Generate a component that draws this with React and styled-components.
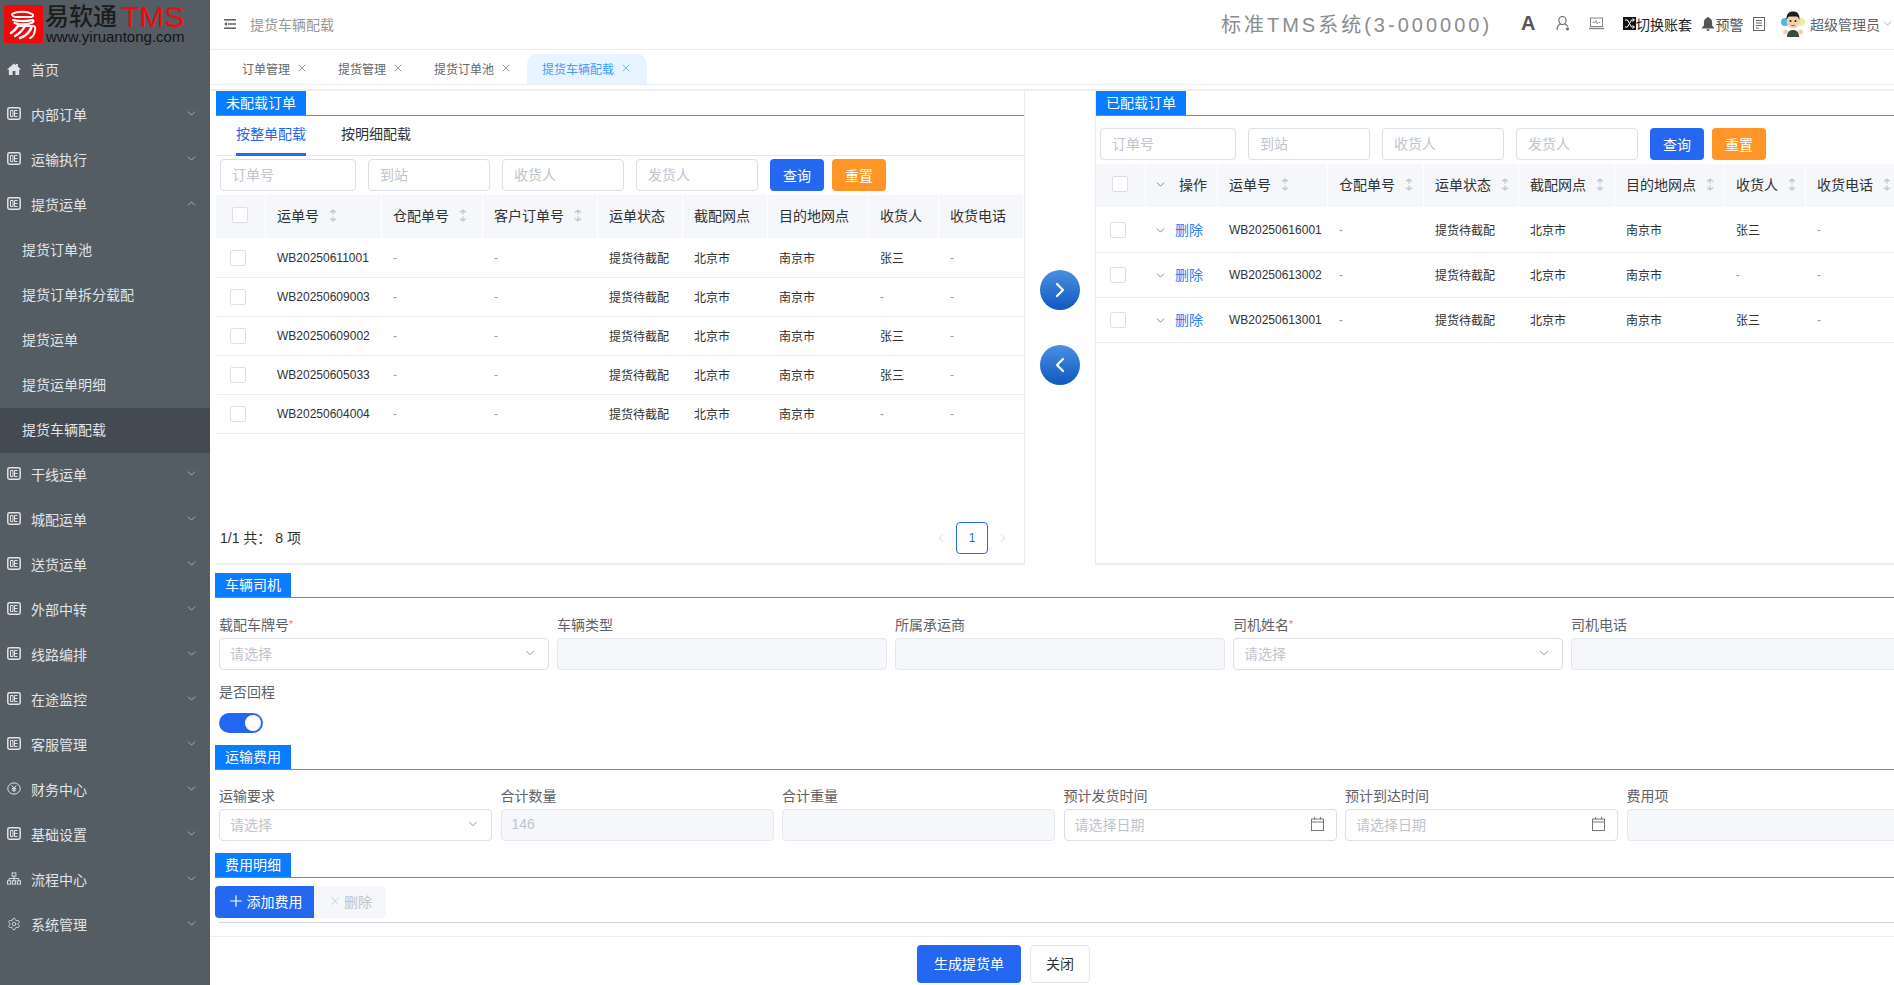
import React from "react";
import styled, { createGlobalStyle } from "styled-components";
import { ChevronDown, ChevronUp, ChevronLeft, ChevronRight, X, Plus, Settings } from "lucide-react";

const Global = createGlobalStyle`
  html, body { margin: 0; padding: 0; height: 100%; overflow: hidden; background: #fff; }
  body { font-family: "Liberation Sans", "Noto Sans CJK SC", sans-serif; font-size: 14px; color: #333; }
  * { box-sizing: border-box; }
  input::placeholder { color: #c0c4cc; opacity: 1; }
`;

const Page = styled.div`display: flex; width: 1894px; height: 985px; overflow: hidden;`;
const Sidebar = styled.aside`width: 210px; flex: none; background: #545c64; color: #e2e4e6;`;
const Logo = styled.div`height: 48px; display: flex; padding: 5px 0 0 4px;`;
const LogoWords = styled.div`margin-left: 2px; display: flex; flex-direction: column;`;
const LogoTop = styled.div`display: flex; align-items: center; height: 26px; line-height: 26px; margin-top: -1px; color: #1c1c1c; font-size: 24px; font-weight: 500; white-space: nowrap;`;
const LogoTms = styled.span`color: #f20a0a; font-size: 30px; line-height: 26px; margin-left: 4px; font-weight: 400;`;
const LogoUrl = styled.div`color: #141414; font-size: 15px; line-height: 13px; padding-left: 1px; white-space: nowrap;`;
const MenuItem = styled.div`
  height: 45px; display: flex; align-items: center; position: relative; padding-bottom: 4px;
  padding-left: ${p => (p.$sub ? "22px" : "7px")};
  background: ${p => (p.$active ? "#434a52" : "transparent")};
`;
const MenuIcon = styled.span`width: 14px; height: 14px; margin-right: 10px; display: flex; align-items: center; justify-content: center; color: #e2e4e6;`;
const MenuArrow = styled.span`margin-left: auto; margin-right: 12px; display: flex; color: #dfe1e3;`;

const Main = styled.main`width: 1684px; flex: none; display: flex; flex-direction: column; height: 985px; overflow: hidden;`;
const Header = styled.header`height: 50px; border-bottom: 1px solid #eee; display: flex; align-items: center; padding: 0 0 2px 14px; flex: none;`;
const Crumb = styled.span`margin-left: 14px; color: #97979a;`;
const HeadRight = styled.div`margin-left: auto; display: flex; align-items: center; color: #606266;`;
const SysTitle = styled.span`font-size: 20px; letter-spacing: 3px; color: #8c8c8c; margin-right: 29px; white-space: nowrap;`;
const HeadBit = styled.span`display: flex; align-items: center; margin-left: ${p => p.$ml || 0}px; color: ${p => p.$c || "#606266"}; white-space: nowrap;`;
const BellText = styled.span`margin-left: 2px;`;
const LetterA = styled.span`font-size: 20px; font-weight: 700; color: #555;`;

const TabBar = styled.nav`height: 35px; flex: none; display: flex; align-items: flex-end; padding-left: 17px; border-bottom: 1px solid #eee;`;
const Tab = styled.div`
  height: 30px; display: flex; align-items: center; gap: 6px; padding: 0 15px 2px; font-size: 12px;
  color: ${p => (p.$active ? "#409eff" : "#666")};
  background: ${p => (p.$active ? "#e8f4ff" : "transparent")};
  border-radius: 10px 10px 0 0;
`;
const Body = styled.div`margin-top: 4px; border-top: 2px solid #eee; padding-left: 5px; flex: none;`;
const TopRow = styled.section`display: flex; height: 474px; margin-left: 1px;`;
const Panel = styled.div`
  width: ${p => p.$w}px; flex: none; display: flex; flex-direction: column;
  border-bottom: 2px solid #eee;
  ${p => (p.$right ? "border-left: 1px solid #eee;" : "border-right: 1px solid #eee;")}
`;
const Mid = styled.div`width: 70px; flex: none; display: flex; flex-direction: column; align-items: center; padding-top: 179px; gap: 35px;`;
const Circle = styled.button`
  width: 40px; height: 40px; border-radius: 50%; border: 0; padding: 0; color: #fff; display: flex; align-items: center; justify-content: center;
  background: linear-gradient(180deg, #4b8fe2, #0f59bf);
`;
const SectionHead = styled.div`height: 25px; border-bottom: 1px solid #4a90e8; flex: none;`;
const SectionTag = styled.span`
  display: inline-block; height: 24px; line-height: 24px; padding: 0 10px; background: #0a7cff; color: #fff; font-size: 14px; white-space: nowrap;
`;
const SubTabs = styled.div`height: 40px; flex: none; display: flex; gap: 35px; padding-left: 20px; border-bottom: 1px solid #e4e7ed;`;
const SubTab = styled.div`
  height: 40px; line-height: 36px; color: ${p => (p.$active ? "#2468f2" : "#303133")};
  border-bottom: ${p => (p.$active ? "3px solid #2468f2" : "0")};
`;
const Filters = styled.div`display: flex; gap: 12px; height: 32px; flex: none; margin-top: ${p => p.$mt}px; padding-left: 4px;`;
const FilterInput = styled.input`
  width: ${p => p.$w}px; height: 32px; border: 1px solid #dcdfe6; border-radius: 4px; padding: 0 11px; font: inherit; outline: 0; background: #fff;
`;
const Btn = styled.button`
  height: 32px; width: ${p => p.$w || 54}px; border: 0; border-radius: 4px; color: #fff; font: inherit; padding: 0 0 1px;
  background: ${p => p.$bg}; margin-left: ${p => p.$ml || 0}px;
`;
const Table = styled.div`margin-top: 4px; flex: none; width: ${p => p.$w}px;`;
const Row = styled.div`
  display: grid; grid-template-columns: ${p => p.$cols}; align-items: center;
  height: ${p => (p.$head ? 44 : p.$h)}px;
  background: ${p => (p.$head ? "#f5f7fa" : "#fff")};
  border-bottom: ${p => (p.$head ? "1px solid #fff" : "1px solid #ebeef5")};
`;
const HeadCell = styled.div`
  height: 100%; display: flex; align-items: center; gap: 10px; padding: 0 0 3px ${p => (p.$pl === undefined ? 11 : p.$pl)}px; color: #303133; font-size: 14px;
  border-right: 1px solid #fff; white-space: nowrap; overflow: hidden;
`;
const Cell = styled.div`
  padding-left: ${p => (p.$pl === undefined ? 11 : p.$pl)}px; padding-bottom: ${p => (p.$cjk ? 2 : 0)}px; font-size: 12px; color: ${p => (p.$dash ? "#999" : "#303133")}; white-space: nowrap; display: flex; align-items: center;
`;
const Check = styled.span`display: block; width: 16px; height: 16px; border: 1px solid #dcdfe6; border-radius: 2px; background: #fff;`;
const OpLabel = styled.span`margin-left: 2px;`;
const DelLink = styled.span`color: #2b7cf6; font-size: 14px; margin-left: 8px; margin-bottom: 2px;`;
const Pager = styled.div`margin-top: auto; height: 32px; display: flex; align-items: center; padding: 0 14px 0 4px; margin-bottom: 9px; color: #303133;`;
const PagerText = styled.span`margin-bottom: 3px;`;
const PagerNum = styled.span`
  width: 32px; height: 32px; border: 1px solid #2468f2; border-radius: 4px; color: #2468f2; font-size: 12px; display: flex; align-items: center; justify-content: center; margin: 0 8px;
`;
const PagerArrow = styled.span`display: flex; color: #c0c4cc;`;
const PagerBox = styled.div`margin-left: auto; display: flex; align-items: center;`;

const Section = styled.section`margin-top: ${p => p.$mt}px;`;
const FormGrid = styled.div`display: flex; gap: ${p => p.$gap}px; padding: ${p => p.$pt}px 0 0 4px; width: 1800px;`;
const Field = styled.div`width: ${p => p.$w}px; flex: none;`;
const Label = styled.div`height: 24px; line-height: 24px; margin-bottom: 1px; color: #606266;`;
const Req = styled.span`color: #f56c6c; font-size: 10px; vertical-align: 2px;`;
const Box = styled.div`
  height: 32px; border: 1px solid ${p => (p.$off ? "#e4e7ed" : "#dcdfe6")}; border-radius: 4px; background: ${p => (p.$off ? "#f5f7fa" : "#fff")};
  display: flex; align-items: center; justify-content: space-between; padding: 0 ${p => p.$pr || 10}px 2px 10px; color: #c0c4cc;
`;
const BoxIcon = styled.span`display: flex; color: #777;`;
const SwitchWrap = styled.div`padding: 8px 0 0 4px;`;
const Switch = styled.span`
  display: block; width: 44px; height: 20px; border-radius: 10px; background: #2468f2; position: relative;
  &::after { content: ""; position: absolute; right: 2px; top: 2px; width: 16px; height: 16px; border-radius: 50%; background: #fff; }
`;
const ToolRow = styled.div`display: flex; margin-top: 8px; height: 32px;`;
const AddBtn = styled.button`
  width: 99px; height: 32px; border: 0; background: #2468f2; color: #fff; font: inherit; border-radius: 4px 0 0 4px; display: flex; align-items: center; justify-content: center; gap: 2px; padding: 0 0 2px;
`;
const DelBtn = styled.button`
  width: 72px; height: 32px; border: 0; background: #f5f7fa; color: #c0c4cc; font: inherit; border-radius: 0 4px 4px 0; display: flex; align-items: center; justify-content: center; gap: 2px; padding: 0 0 2px;
`;
const Rule = styled.hr`margin: 4px 0 0 4px; border: 0; border-top: 1px solid #d6d6dc; height: 0;`;
const Footer = styled.footer`margin-top: 13px; border-top: 1px solid #eee; padding: 8px 0 0 707px; display: flex; gap: 9px; flex: none;`;
const FootMain = styled.button`width: 104px; height: 38px; border: 0; border-radius: 4px; background: #2468f2; color: #fff; font: inherit; padding: 0 0 2px;`;
const FootPlain = styled.button`width: 60px; height: 38px; border: 1px solid #e4e7ed; border-radius: 4px; background: #fff; color: #303133; font: inherit; padding: 0 0 2px;`;

const LogoMark = () => (
  <svg width="39" height="38" viewBox="0 0 39 38" style={{ flex: "none" }} aria-label="易软通标志">
    <rect width="39" height="38" fill="#ee0a0a" />
    <g fill="none" stroke="#fff" strokeLinecap="round">
      <path d="M8 9c5-3 15-3 20 0 2 1 1 3-1 3H12c-3 0-4-2-4-3z" strokeWidth="2" />
      <path d="M9 15c6 1.500 13 1.500 19 0 1.500 0 2 1.500 .5 2.500-5 2.500-13 2.500-18 .5" strokeWidth="2.200" />
      <path d="M14 21c-2 3-4 5-7 7M21 21c-3 5-6 8-10 10M28 21c-2 6-6 10-12 12" strokeWidth="2.400" />
      <path d="M15 21h14c1.500 0 2.500 1 2.200 3-.6 5-2.200 8-5.200 9" strokeWidth="2" />
    </g>
  </svg>
);
const BoxGlyph = () => (
  <svg width="14" height="13" viewBox="0 0 14 13" fill="none" stroke="currentColor">
    <rect x="0.8" y="0.8" width="12.4" height="11.4" rx="1.6" strokeWidth="1.5" />
    <path d="M3.500 3.500h2.500v6H3.500zM7.500 3.500v6M7.500 3.500h3M7.500 6.500h3M7.500 9.500h3" strokeWidth="1" />
  </svg>
);
const House = () => (
  <svg width="16" height="14" viewBox="0 0 15 14" fill="currentColor">
    <path d="M7.500 1 0.300 7.200l.8.9L2 7.400V13.400h4V9.200h3v4.200h4V7.400l.9.7.8-.9L11.700 4.600V1.600h-2v1.300z" />
  </svg>
);
const Yen = () => (
  <svg width="14" height="13" viewBox="0 0 14 13" fill="none" stroke="currentColor">
    <ellipse cx="7" cy="6.500" rx="6.200" ry="5.600" strokeWidth="1" />
    <path d="M4.700 3.300 7 6.400l2.300-3.100M7 6.400v3.600M4.800 6.600h4.400M4.800 8.200h4.400" strokeWidth="1" />
  </svg>
);
const Org = () => (
  <svg width="15" height="13" viewBox="0 0 15 13" fill="none" stroke="currentColor" strokeWidth="1">
    <rect x="5.500" y="0.500" width="4" height="3.500" />
    <rect x="0.500" y="9" width="3.500" height="3.500" />
    <rect x="5.700" y="9" width="3.500" height="3.500" />
    <rect x="11" y="9" width="3.500" height="3.500" />
    <path d="M7.500 4v5M2.200 9V6.500h10.500V9" />
  </svg>
);
const Outdent = () => (
  <svg width="12" height="10" viewBox="0 0 12 10" fill="#666">
    <rect width="12" height="1.600" />
    <rect x="4" y="4.200" width="8" height="1.600" />
    <rect y="8.400" width="12" height="1.600" />
    <path d="M3 3v4L0 5z" />
  </svg>
);
const Person = () => (
  <svg width="14" height="15" viewBox="0 0 14 15" fill="none" stroke="#606266" strokeWidth="1.100">
    <ellipse cx="6.500" cy="4.500" rx="3.600" ry="4" />
    <path d="M1 14c0-3.400 2-5.400 3.600-6M12 10.500c-.6-1-1.400-1.900-3-2.600" />
    <circle cx="11.500" cy="13" r=".9" fill="#606266" />
  </svg>
);
const Monitor = () => (
  <svg width="15" height="13" viewBox="0 0 15 13" fill="none" stroke="#808488" strokeWidth="1">
    <rect x="1.500" y="1" width="12" height="8.500" />
    <path d="M3.500 5.500h2.500l1-2 1.200 3.500 1-1.500h2" strokeWidth=".8" />
    <path d="M0 11.500h15" strokeWidth="1.400" />
  </svg>
);
const SwitchGlyph = () => (
  <svg width="13" height="13" viewBox="0 0 13 13">
    <rect width="13" height="13" fill="#111" />
    <path d="M2 3h2.500l4 7H11M2 10h2.500l4-7H11M9.500 1.500 11.500 3l-2 1.500M9.500 8.500l2 1.500-2 1.500" fill="none" stroke="#fff" strokeWidth="1" />
  </svg>
);
const Bell = () => (
  <svg width="12" height="14" viewBox="0 0 12 14" fill="#555">
    <path d="M6 0c.7 0 1.100.5 1.100 1.100 2 .5 3 2.100 3 4v3.400L12 10.800v.6H0v-.6l1.900-2.300V5.100c0-1.900 1-3.500 3-4C4.900.5 5.300 0 6 0zM4.500 12.200h3C7.500 13.200 6.800 14 6 14s-1.500-.8-1.500-1.800z" />
  </svg>
);
const Doc = () => (
  <svg width="12" height="14" viewBox="0 0 12 14" fill="none" stroke="#666" strokeWidth="1">
    <rect x=".5" y=".5" width="11" height="13" />
    <path d="M3 3.500h6M3 6h6M3 8.500h6M3 11h3" />
  </svg>
);
const Avatar = () => (
  <svg width="26" height="26" viewBox="0 0 26 26">
    <circle cx="5" cy="11" r="4" fill="#4fb5ee" />
    <circle cx="21" cy="11" r="4" fill="#e4f0a8" />
    <path d="M7 26c0-5 2-7 6-7s6 2 6 7z" fill="#3d4a44" />
    <ellipse cx="13" cy="10" rx="6.500" ry="7.500" fill="#f4cfae" />
    <path d="M6.500 9C6 3 9 .5 13 .5S20 3 19.500 9c-1-2.500-2-3.500-3-3.500h-7c-1 0-2 1-3 3.500z" fill="#1c1c1c" />
    <circle cx="10.500" cy="10" r="1" fill="#222" />
    <circle cx="15.500" cy="10" r="1" fill="#222" />
    <path d="M11 14.500h4" stroke="#b55" strokeWidth="1" />
    <circle cx="5.500" cy="21" r="2.500" fill="#f4cfae" />
    <circle cx="20.500" cy="21" r="2.500" fill="#f4cfae" />
  </svg>
);
const Calendar = () => (
  <svg width="13" height="14" viewBox="0 0 13 14" fill="none" stroke="#777" strokeWidth="1">
    <rect x=".5" y="2" width="12" height="11.500" />
    <path d="M.5 5h12M3.500 0v2.500M9.500 0v2.500" />
  </svg>
);
const SortSvg = styled.svg`flex: none;`;
const Sort = () => (
  <SortSvg width="8" height="13" viewBox="0 0 8 13" fill="none" stroke="#c4c7cd" strokeWidth="1.300">
    <path d="M1 3.500 4 1l3 2.500M4 1v4.500M1 9.500 4 12l3-2.500M4 12V7.500" />
  </SortSvg>
);

const menu = [
  { t: "首页", i: <House />, noArrow: true },
  { t: "内部订单", i: <BoxGlyph /> },
  { t: "运输执行", i: <BoxGlyph /> },
  { t: "提货运单", i: <BoxGlyph />, open: true },
  { t: "提货订单池", sub: true },
  { t: "提货订单拆分载配", sub: true },
  { t: "提货运单", sub: true },
  { t: "提货运单明细", sub: true },
  { t: "提货车辆配载", sub: true, active: true },
  { t: "干线运单", i: <BoxGlyph /> },
  { t: "城配运单", i: <BoxGlyph /> },
  { t: "送货运单", i: <BoxGlyph /> },
  { t: "外部中转", i: <BoxGlyph /> },
  { t: "线路编排", i: <BoxGlyph /> },
  { t: "在途监控", i: <BoxGlyph /> },
  { t: "客服管理", i: <BoxGlyph /> },
  { t: "财务中心", i: <Yen /> },
  { t: "基础设置", i: <BoxGlyph /> },
  { t: "流程中心", i: <Org /> },
  { t: "系统管理", i: <Settings size={14} strokeWidth={1.4} /> },
];

const leftCols = "50px 116px 101px 115px 85px 85px 101px 70px 85px";
const rightCols = "50px 72px 110px 96px 95px 96px 110px 81px 100px";
const leftHead = [["运单号", 1], ["仓配单号", 1], ["客户订单号", 1], ["运单状态"], ["截配网点"], ["目的地网点"], ["收货人"], ["收货电话"]];
const rightHead = ["运单号", "仓配单号", "运单状态", "截配网点", "目的地网点", "收货人", "收货电话"];
const leftRows = [
  ["WB20250611001", "张三"],
  ["WB20250609003", "-"],
  ["WB20250609002", "张三"],
  ["WB20250605033", "张三"],
  ["WB20250604004", "-"],
];
const rightRows = [
  ["WB20250616001", "张三"],
  ["WB20250613002", "-"],
  ["WB20250613001", "张三"],
];

const Filter4 = ({ w, gap }) => (
  <>
    <FilterInput readOnly placeholder="订单号" $w={w} />
    <FilterInput readOnly placeholder="到站" $w={gap} />
    <FilterInput readOnly placeholder="收货人" $w={gap} />
    <FilterInput readOnly placeholder="发货人" $w={gap} />
  </>
);

const Select = ({ text = "请选择" }) => (
  <Box $pr={11}><span>{text}</span><BoxIcon><ChevronDown size={14} strokeWidth={1.3} /></BoxIcon></Box>
);
const Close = () => <X size={12} strokeWidth={1.4} />;

export default function App() {
  return (
    <Page>
      <Global />
      <Sidebar>
        <Logo>
          <LogoMark />
          <LogoWords>
            <LogoTop>易软通<LogoTms>TMS</LogoTms></LogoTop>
            <LogoUrl>www.yiruantong.com</LogoUrl>
          </LogoWords>
        </Logo>
        {menu.map((m, i) => (
          <MenuItem key={i} $sub={m.sub} $active={m.active}>
            {m.i && <MenuIcon>{m.i}</MenuIcon>}
            <span>{m.t}</span>
            {!m.sub && !m.noArrow && (
              <MenuArrow>{m.open ? <ChevronUp size={13} strokeWidth={1.1} /> : <ChevronDown size={13} strokeWidth={1.1} />}</MenuArrow>
            )}
          </MenuItem>
        ))}
      </Sidebar>
      <Main>
        <Header>
          <Outdent />
          <Crumb>提货车辆配载</Crumb>
          <HeadRight>
            <SysTitle>标准TMS系统(3-000000)</SysTitle>
            <LetterA>A</LetterA>
            <HeadBit $ml={20}><Person /></HeadBit>
            <HeadBit $ml={19}><Monitor /></HeadBit>
            <HeadBit $ml={19.5} $c="#222"><SwitchGlyph />切换账套</HeadBit>
            <HeadBit $ml={9.5} $c="#555"><Bell /><BellText>预警</BellText></HeadBit>
            <HeadBit $ml={9.5}><Doc /></HeadBit>
            <HeadBit $ml={15}><Avatar /></HeadBit>
            <HeadBit $ml={4}>超级管理员</HeadBit>
            <HeadBit $ml={1} $c="#888"><ChevronDown size={13} strokeWidth={1.2} /></HeadBit>
          </HeadRight>
        </Header>
        <TabBar>
          <Tab>订单管理<Close /></Tab>
          <Tab>提货管理<Close /></Tab>
          <Tab>提货订单池<Close /></Tab>
          <Tab $active>提货车辆配载<Close /></Tab>
        </TabBar>
        <Body>
          <TopRow>
            <Panel $w={809}>
              <SectionHead><SectionTag>未配载订单</SectionTag></SectionHead>
              <SubTabs>
                <SubTab $active>按整单配载</SubTab>
                <SubTab>按明细配载</SubTab>
              </SubTabs>
              <Filters $mt={3}>
                <Filter4 w={136} gap={122} />
                <Btn $bg="#2468f2">查询</Btn>
                <Btn $bg="#ff9527" $ml={-4}>重置</Btn>
              </Filters>
              <Table $w={808}>
                <Row $head $cols={leftCols}>
                  <HeadCell $pl={16}><Check /></HeadCell>
                  {leftHead.map(([t, s]) => <HeadCell key={t}>{t}{s && <Sort />}</HeadCell>)}
                </Row>
                {leftRows.map(([id, who]) => (
                  <Row key={id} $h={39} $cols={leftCols}>
                    <Cell $pl={14}><Check /></Cell>
                    <Cell>{id}</Cell>
                    <Cell $dash>-</Cell>
                    <Cell $dash>-</Cell>
                    <Cell $cjk>提货待截配</Cell>
                    <Cell $cjk>北京市</Cell>
                    <Cell $cjk>南京市</Cell>
                    <Cell $cjk={who !== "-"} $dash={who === "-"}>{who}</Cell>
                    <Cell $dash>-</Cell>
                  </Row>
                ))}
              </Table>
              <Pager>
                <PagerText>1/1 共： 8 项</PagerText>
                <PagerBox>
                  <PagerArrow><ChevronLeft size={14} strokeWidth={1.2} /></PagerArrow>
                  <PagerNum>1</PagerNum>
                  <PagerArrow><ChevronRight size={14} strokeWidth={1.2} /></PagerArrow>
                </PagerBox>
              </Pager>
            </Panel>
            <Mid>
              <Circle aria-label="右移"><ChevronRight size={24} strokeWidth={2.2} /></Circle>
              <Circle aria-label="左移"><ChevronLeft size={24} strokeWidth={2.2} /></Circle>
            </Mid>
            <Panel $w={810} $right>
              <SectionHead><SectionTag>已配载订单</SectionTag></SectionHead>
              <Filters $mt={12}>
                <Filter4 w={136} gap={122} />
                <Btn $bg="#2468f2">查询</Btn>
                <Btn $bg="#ff9527" $ml={-4}>重置</Btn>
              </Filters>
              <Table $w={810}>
                <Row $head $cols={rightCols}>
                  <HeadCell $pl={16}><Check /></HeadCell>
                  <HeadCell $pl={8}><ChevronDown size={13} strokeWidth={1.4} color="#666" /><OpLabel>操作</OpLabel></HeadCell>
                  {rightHead.map(t => <HeadCell key={t}>{t}<Sort /></HeadCell>)}
                </Row>
                {rightRows.map(([id, who]) => (
                  <Row key={id} $h={45} $cols={rightCols}>
                    <Cell $pl={14}><Check /></Cell>
                    <Cell $pl={8}><ChevronDown size={13} strokeWidth={1.4} color="#666" /><DelLink>删除</DelLink></Cell>
                    <Cell>{id}</Cell>
                    <Cell $dash>-</Cell>
                    <Cell $cjk>提货待截配</Cell>
                    <Cell $cjk>北京市</Cell>
                    <Cell $cjk>南京市</Cell>
                    <Cell $cjk={who !== "-"} $dash={who === "-"}>{who}</Cell>
                    <Cell $dash>-</Cell>
                  </Row>
                ))}
              </Table>
            </Panel>
          </TopRow>

          <Section $mt={8}>
            <SectionHead><SectionTag>车辆司机</SectionTag></SectionHead>
            <FormGrid $gap={8.5} $pt={15}>
              <Field $w={329.5}><Label>载配车牌号<Req>*</Req></Label><Select /></Field>
              <Field $w={329.5}><Label>车辆类型</Label><Box $off /></Field>
              <Field $w={329.5}><Label>所属承运商</Label><Box $off /></Field>
              <Field $w={329.5}><Label>司机姓名<Req>*</Req></Label><Select /></Field>
              <Field $w={329.5}><Label>司机电话</Label><Box $off /></Field>
            </FormGrid>
            <FormGrid $gap={8} $pt={10}>
              <Field $w={329}><Label>是否回程</Label></Field>
            </FormGrid>
            <SwitchWrap><Switch /></SwitchWrap>
          </Section>

          <Section $mt={12}>
            <SectionHead><SectionTag>运输费用</SectionTag></SectionHead>
            <FormGrid $gap={8.5} $pt={14}>
              <Field $w={273}><Label>运输要求</Label><Select /></Field>
              <Field $w={273}><Label>合计数量</Label><Box $off>146</Box></Field>
              <Field $w={273}><Label>合计重量</Label><Box $off /></Field>
              <Field $w={273}><Label>预计发货时间</Label><Box $pr={12}><span>请选择日期</span><Calendar /></Box></Field>
              <Field $w={273}><Label>预计到达时间</Label><Box $pr={12}><span>请选择日期</span><Calendar /></Box></Field>
              <Field $w={273}><Label>费用项</Label><Box $off /></Field>
            </FormGrid>
          </Section>

          <Section $mt={12}>
            <SectionHead><SectionTag>费用明细</SectionTag></SectionHead>
            <ToolRow>
              <AddBtn><Plus size={18} strokeWidth={1.6} />添加费用</AddBtn>
              <DelBtn><X size={14} strokeWidth={1.2} />删除</DelBtn>
            </ToolRow>
            <Rule />
          </Section>
        </Body>
        <Footer>
          <FootMain>生成提货单</FootMain>
          <FootPlain>关闭</FootPlain>
        </Footer>
      </Main>
    </Page>
  );
}
